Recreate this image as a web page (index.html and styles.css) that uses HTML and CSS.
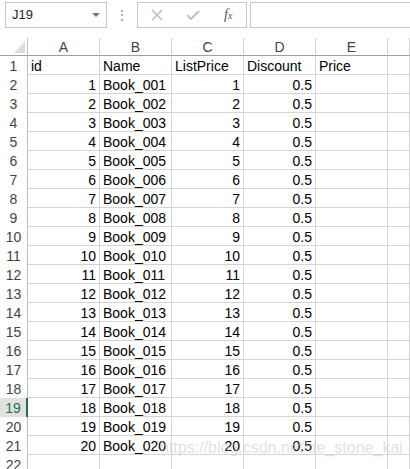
FILE: index.html
```
<!DOCTYPE html>
<html lang="en">
<head>
<meta charset="UTF-8">
<title>Books.xlsx</title>
<link rel="stylesheet" href="styles.css">
</head>
<body>
  <!-- formula bar -->
  <div class="formula-bar">
    <div class="name-box">
      <span class="cell-ref">J19</span>
      <span class="drop"></span>
    </div>
    <span class="grip">&#8942;</span>
    <div class="fx-box">
      <svg class="fx-icon" width="14" height="14" viewBox="0 0 14 14"><path d="M2 2 L12 12 M12 2 L2 12" stroke="#bdbdbd" stroke-width="1.6" fill="none"/></svg>
      <svg class="fx-icon" width="16" height="14" viewBox="0 0 16 14"><path d="M2 7 L6 11 L14 3" stroke="#bdbdbd" stroke-width="1.8" fill="none"/></svg>
      <span class="fx-label"><i>f</i><i class="x">x</i></span>
    </div>
    <div class="formula-input"></div>
  </div>

  <!-- sheet -->
  <div class="sheet" id="sheet">
    <div class="corner"><span class="tri"></span></div>
    <div class="col-head">A</div>
    <div class="col-head">B</div>
    <div class="col-head">C</div>
    <div class="col-head">D</div>
    <div class="col-head">E</div>
    <div class="col-head"></div>
  </div>

  <div class="watermark">https://blog.csdn.net/de_stone_kai</div>

<script>
  var sheet = document.getElementById('sheet');
  var html = '';
  for (var r = 1; r <= 22; r++) {
    var sel = r === 19 ? ' selected' : '';
    html += '<div class="row-head' + sel + '">' + r + '</div>';
    if (r === 1) {
      html += '<div class="cell">id</div><div class="cell">Name</div><div class="cell">ListPrice</div>' +
        '<div class="cell">Discount</div><div class="cell">Price</div><div class="cell"></div>';
    } else if (r <= 21) {
      var n = r - 1;
      var code = ('00' + n).slice(-3);
      html += '<div class="cell num">' + n + '</div><div class="cell">Book_' + code + '</div>' +
        '<div class="cell num">' + n + '</div><div class="cell num">0.5</div><div class="cell"></div><div class="cell"></div>';
    } else {
      html += '<div class="cell"></div><div class="cell"></div><div class="cell"></div>' +
        '<div class="cell"></div><div class="cell"></div><div class="cell"></div>';
    }
  }
  sheet.insertAdjacentHTML('beforeend', html);
</script>
</body>
</html>
```

FILE: styles.css
```
body {
  margin: 0;
  width: 410px;
  height: 469px;
  overflow: hidden;
  position: relative;
  background: #fff;
  font-family: "Liberation Sans", Arial, sans-serif;
  color: #000;
}
.formula-bar {
  display: flex;
  align-items: center;
  height: 28px;
  padding: 1px 0 0 5px;
  box-sizing: border-box;
}
.name-box {
  width: 102px;
  height: 26px;
  box-sizing: border-box;
  border: 1px solid #c6c6c6;
  display: flex;
  align-items: center;
  justify-content: space-between;
  padding: 0 6px 0 6px;
}
.cell-ref {
  font-size: 13px;
  color: #222;
}
.drop {
  width: 0;
  height: 0;
  border-left: 4px solid transparent;
  border-right: 4px solid transparent;
  border-top: 4px solid #777;
}
.grip {
  width: 30px;
  text-align: center;
  color: #9a9a9a;
  font-size: 14px;
}
.fx-box {
  width: 110px;
  height: 26px;
  box-sizing: border-box;
  border: 1px solid #c6c6c6;
  display: flex;
  align-items: center;
  padding-left: 12px;
  gap: 21px;
}
.fx-label {
  font-family: "Liberation Serif", serif;
  font-size: 14px;
  color: #555;
  margin-left: 2px;
}
.fx-label .x {
  font-size: 10px;
}
.formula-input {
  flex: 1;
  height: 26px;
  box-sizing: border-box;
  border: 1px solid #c6c6c6;
  border-right: none;
  margin-left: 3px;
}
.sheet {
  margin-top: 10px;
  display: grid;
  grid-template-columns: 28px repeat(5, 72px) 1fr;
  grid-template-rows: 18px;
  grid-auto-rows: 19px;
  font-size: 14px;
}
.sheet > div {
  box-sizing: border-box;
  white-space: nowrap;
  overflow: hidden;
}
.corner {
  position: relative;
  border-right: 1px solid #bdbdbd;
  border-bottom: 1px solid #9f9f9f;
}
.tri {
  position: absolute;
  right: 2px;
  bottom: 2px;
  width: 0;
  height: 0;
  border-left: 11px solid transparent;
  border-bottom: 12px solid #dcdcdc;
}
.col-head {
  text-align: center;
  color: #444;
  padding-top: 1px;
  line-height: 17px;
  border-right: 1px solid #d4d4d4;
  border-bottom: 1px solid #9f9f9f;
}
.row-head {
  text-align: center;
  color: #444;
  padding-top: 2px;
  line-height: 17px;
  border-right: 1px solid #bdbdbd;
}
.row-head.selected {
  background: #e1e1e1;
  color: #217346;
  border-right: 2px solid #217346;
}
.cell {
  padding: 2px 3px 0;
  line-height: 17px;
  border-right: 1px solid #d4d4d4;
  border-bottom: 1px solid #d4d4d4;
}
.cell.num {
  text-align: right;
}
.watermark {
  position: absolute;
  left: 160px;
  top: 439px;
  font-size: 16px;
  color: rgba(200, 200, 200, 0.55);
  white-space: nowrap;
}
```
